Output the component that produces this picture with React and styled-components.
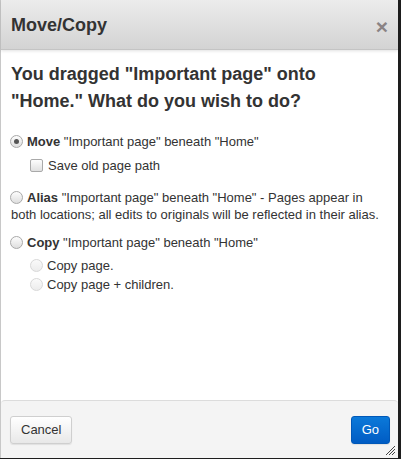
import styled, { createGlobalStyle } from "styled-components";

const Global = createGlobalStyle`
    html, body {
        margin: 0;
        padding: 0;
        background: #1e1e1e;
    }
    body {
        font-family: "Liberation Sans", Arial, sans-serif;
        color: #333;
    }
`;

const Dialog = styled.div`
    position: relative;
    width: 398px;
    height: 458px;
    background: #fff;
    border-left: 1px solid #c8c8c8;
    display: flex;
    flex-direction: column;
    box-sizing: border-box;
`;

const Header = styled.div`
    height: 49px;
    display: flex;
    align-items: center;
    justify-content: space-between;
    padding: 0 10px 0 10px;
    background: linear-gradient(#ececec, #d3d3d3);
    border-bottom: 1px solid #c4c4c4;
    box-shadow: 0 1px 3px rgba(0, 0, 0, 0.12);
`;

const Title = styled.h3`
    margin: 0;
    font-size: 18px;
    font-weight: bold;
    color: #333;
    padding-top: 1px;
`;

const Close = styled.span`
    font-size: 21px;
    font-weight: bold;
    color: #8a8384;
    line-height: 1;
    margin-top: 4px;
`;

const Body = styled.div`
    flex: 1;
    padding: 11px 10px 0 10px;
`;

const Question = styled.h4`
    margin: 0 0 18px 0;
    font-size: 18px;
    line-height: 27px;
    font-weight: bold;
    color: #333;
`;

const Option = styled.div`
    font-size: 13px;
    line-height: 17px;
    margin-bottom: ${(p) => p.$gap || 0}px;
    padding-left: ${(p) => (p.$indent ? 20 : 0)}px;
    color: #333;
`;

const Radio = styled.span`
    display: inline-block;
    box-sizing: border-box;
    width: 13px;
    height: 13px;
    border-radius: 50%;
    border: 1px solid ${(p) => (p.$faded ? "#d8d8d8" : "#a9a9a9")};
    background: ${(p) => (p.$faded ? "linear-gradient(#fafafa, #ececec)" : "linear-gradient(#fdfdfd, #dedede)")};
    vertical-align: -2px;
    margin-left: -1px;
    margin-right: 4px;
    position: relative;
    &::after {
        content: "";
        display: ${(p) => (p.$checked ? "block" : "none")};
        position: absolute;
        left: 3px;
        top: 3px;
        width: 5px;
        height: 5px;
        border-radius: 50%;
        background: #555;
    }
`;

const Check = styled.span`
    display: inline-block;
    box-sizing: border-box;
    width: 13px;
    height: 13px;
    border-radius: 2px;
    border: 1px solid #a9a9a9;
    background: linear-gradient(#fdfdfd, #e0e0e0);
    vertical-align: -2px;
    margin-left: -1px;
    margin-right: 5px;
`;

const Footer = styled.div`
    height: 58px;
    box-sizing: border-box;
    display: flex;
    align-items: center;
    justify-content: space-between;
    padding: 0 8px 0 9px;
    background: #f4f4f4;
    border-top: 1px solid #dcdcdc;
    border-radius: 4px 4px 0 0;
`;

const Button = styled.button`
    height: 28px;
    padding: 0 10px;
    font-family: "Liberation Sans", Arial, sans-serif;
    font-size: 13px;
    border-radius: 3px;
    cursor: pointer;
    color: ${(p) => (p.$primary ? "#fff" : "#333")};
    border: 1px solid ${(p) => (p.$primary ? "#0058b8" : "#cfcfcf")};
    background: ${(p) =>
        p.$primary ? "linear-gradient(#0b79d9, #005cc4)" : "linear-gradient(#ffffff, #e8e8e8)"};
    box-shadow: 0 1px 1px rgba(0, 0, 0, 0.08);
`;

const Grip = styled.svg`
    position: absolute;
    right: 2px;
    bottom: 2px;
`;

function App() {
    return (
        <>
            <Global />
            <Dialog>
                <Header>
                    <Title>Move/Copy</Title>
                    <Close>×</Close>
                </Header>
                <Body>
                    <Question>You dragged "Important page" onto "Home." What do you wish to do?</Question>
                    <Option $gap={7}>
                        <Radio $checked />
                        <b>Move</b> "Important page" beneath "Home"
                    </Option>
                    <Option $indent $gap={15}>
                        <Check />
                        Save old page path
                    </Option>
                    <Option $gap={11}>
                        <Radio />
                        <b>Alias</b> "Important page" beneath "Home" - Pages appear in both locations; all edits to
                        originals will be reflected in their alias.
                    </Option>
                    <Option $gap={6}>
                        <Radio />
                        <b>Copy</b> "Important page" beneath "Home"
                    </Option>
                    <Option $indent $gap={2}>
                        <Radio $faded />
                        Copy page.
                    </Option>
                    <Option $indent>
                        <Radio $faded />
                        Copy page + children.
                    </Option>
                </Body>
                <Footer>
                    <Button>Cancel</Button>
                    <Button $primary>Go</Button>
                </Footer>
                <Grip width="11" height="11" viewBox="0 0 11 11">
                    <path d="M10 1 L1 10 M10 4 L4 10 M10 7 L7 10" stroke="#444" strokeWidth="1" />
                </Grip>
            </Dialog>
        </>
    );
}

export default App;
